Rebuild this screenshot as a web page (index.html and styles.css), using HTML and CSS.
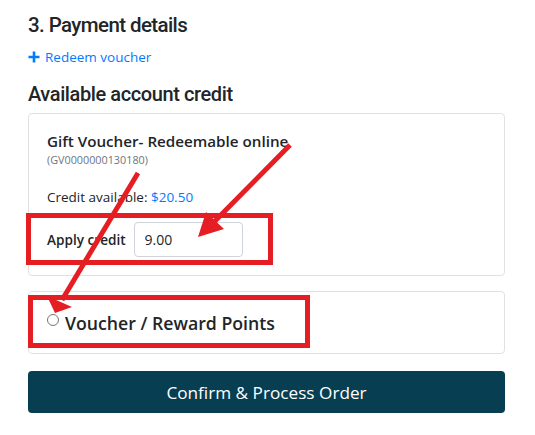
FILE: index.html
```html
<!DOCTYPE html>
<html lang="en">
<head>
    <meta charset="UTF-8">
    <meta name="viewport" content="width=device-width, initial-scale=1.0">
    <title>Payment details</title>
    <link rel="stylesheet" href="styles.css">
</head>
<body>
    <div class="page">
        <h2 class="section-title">3. Payment details</h2>

        <a href="#" class="redeem">
            <svg class="plus" width="12" height="12" viewBox="0 0 12 12">
                <path d="M6 0.5v11M0.5 6h11" stroke="#007bff" stroke-width="2.6" fill="none"/>
            </svg>
            Redeem voucher
        </a>

        <h3 class="credit-title">Available account credit</h3>

        <!-- Gift voucher card -->
        <div class="card">
            <div class="voucher-name">Gift Voucher- Redeemable online</div>
            <div class="voucher-code">(GV0000000130180)</div>
            <p class="credit-available">Credit available: <span class="amount">$20.50</span></p>
            <div class="apply-row">
                <label for="apply-credit">Apply credit</label>
                <input type="text" id="apply-credit" value="9.00">
            </div>
        </div>

        <!-- Reward points option -->
        <div class="card option">
            <label class="option-label">
                <input type="radio" name="payment" class="radio">
                Voucher / Reward Points
            </label>
        </div>

        <button class="confirm">Confirm &amp; Process Order</button>

        <!-- Red annotation marks drawn over the page -->
        <svg class="annotations" width="535" height="435" viewBox="0 0 535 435">
            <g fill="none" stroke="#e41e22" stroke-width="5">
                <rect x="28.5" y="215.5" width="242" height="47"/>
                <rect x="30.5" y="297.5" width="277" height="48"/>
                <line x1="290" y1="145" x2="212" y2="224"/>
                <line x1="138" y1="173" x2="62" y2="300"/>
            </g>
            <g fill="#e41e22">
                <polygon points="198,237 206,212 224,229"/>
                <polygon points="55,313 47,296 72,307"/>
            </g>
        </svg>
    </div>
</body>
</html>
```

FILE: styles.css
```css
body {
    margin: 0;
    padding: 0;
    background: white;
    font-family: "Open Sans", "Noto Sans", sans-serif;
    color: #212529;
}
.page {
    position: relative;
    width: 477px;
    height: 435px;
    padding-left: 28px;
    overflow: hidden;
}
.section-title {
    margin: 10px 0 0;
    font-family: Roboto, "Open Sans", sans-serif;
    font-size: 20.5px;
    line-height: 30px;
    font-weight: 500;
    letter-spacing: -0.6px;
}
.redeem {
    display: flex;
    align-items: center;
    gap: 5px;
    margin-top: 7px;
    font-size: 13.5px;
    line-height: 20px;
    color: #007bff;
    text-decoration: none;
}
.credit-title {
    margin: 14px 0 6px;
    font-family: Roboto, "Open Sans", sans-serif;
    font-size: 20px;
    line-height: 26px;
    font-weight: 500;
    letter-spacing: -0.4px;
}
.card {
    border: 1px solid #dfe2e5;
    border-radius: 4px;
    padding: 16px 18px 18px;
}
.voucher-name {
    font-size: 15.2px;
    line-height: 22px;
    font-weight: 600;
}
.voucher-code {
    font-size: 10.8px;
    line-height: 16px;
    color: #6c757d;
}
.credit-available {
    margin: 19px 0 0;
    font-size: 13.5px;
    line-height: 20px;
}
.amount {
    color: #007bff;
}
.apply-row {
    display: flex;
    align-items: center;
    gap: 8px;
    margin-top: 15px;
}
.apply-row label {
    font-size: 13.6px;
    font-weight: 600;
}
.apply-row input {
    width: 109px;
    height: 35px;
    box-sizing: border-box;
    padding: 0 10px;
    border: 1px solid #ced4da;
    border-radius: 4px;
    font-family: inherit;
    font-size: 14px;
    color: #212529;
}
.option {
    margin-top: 15px;
    padding: 17px 18px 16px;
}
.option-label {
    display: flex;
    align-items: center;
    gap: 6px;
    font-size: 17.7px;
    line-height: 28px;
    font-weight: 600;
}
.radio {
    width: 12px;
    height: 12px;
    margin: 0;
    position: relative;
    top: -3px;
}
.confirm {
    display: block;
    width: 100%;
    height: 42px;
    margin-top: 17px;
    border: none;
    border-radius: 4px;
    background: #083e51;
    color: white;
    font-family: inherit;
    font-size: 17.2px;
}
.annotations {
    position: absolute;
    left: 0;
    top: 0;
    pointer-events: none;
}
```
